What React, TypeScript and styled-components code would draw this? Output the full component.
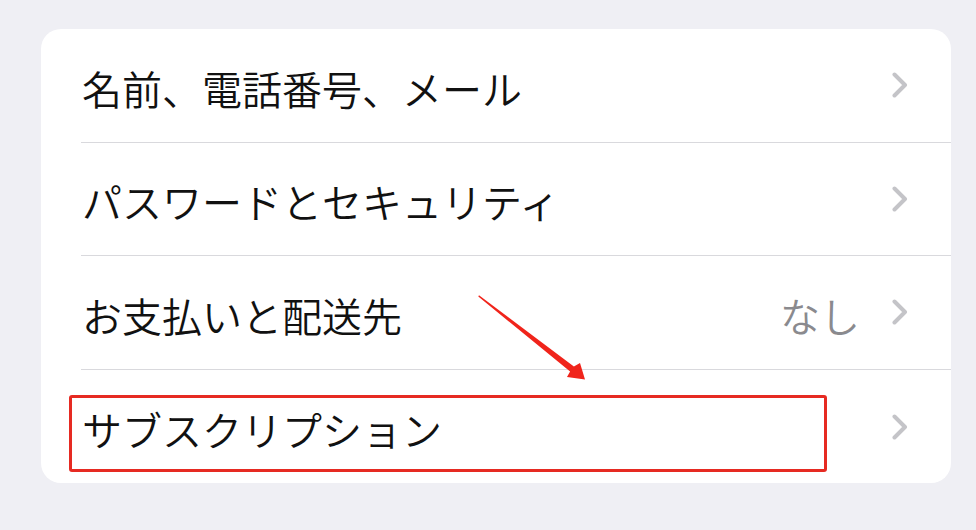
import React from "react";
import styled, { createGlobalStyle } from "styled-components";

const Global = createGlobalStyle`
  html, body { margin: 0; padding: 0; background: #efeff4; }
  body { font-family: "Noto Sans CJK JP", "Noto Sans", sans-serif; }
`;

const Page = styled.div`
  width: 976px;
  height: 530px;
  box-sizing: border-box;
  padding: 29px 25px 0 41px;
  background: #efeff4;
`;

const Card = styled.div`
  position: relative;
  background: #ffffff;
  border-radius: 20px;
`;

const Row = styled.div`
  position: relative;
  height: 113.6px;
  padding-left: 40px;
  box-sizing: border-box;
`;

const RowInner = styled.div<{ $last?: boolean }>`
  height: 100%;
  box-sizing: border-box;
  display: flex;
  align-items: center;
  padding-right: 43px;
  border-bottom: ${(p) => (p.$last ? "none" : "1px solid #d9d9dd")};
`;

const Label = styled.span`
  flex: 1;
  font-size: 40px;
  font-weight: 350;
  color: #111;
  padding-left: 1px;
  padding-top: 5px;
  line-height: 1;
`;

const Detail = styled.span`
  font-size: 40px;
  font-weight: 350;
  color: #8a8a8e;
  line-height: 1;
  padding-top: 5px;
  margin-right: 32px;
`;

const Chevron = styled.svg`
  width: 16px;
  height: 26px;
  flex: none;
`;

const Highlight = styled.div`
  position: absolute;
  left: 28px;
  top: 25px;
  width: 758px;
  height: 77px;
  box-sizing: border-box;
  border: 3px solid #e62a22;
  border-radius: 3px;
  pointer-events: none;
`;

const ArrowLayer = styled.svg`
  position: absolute;
  left: 0;
  top: 0;
  width: 910px;
  height: 454px;
  pointer-events: none;
  overflow: visible;
`;

const ChevronIcon = () => (
  <Chevron viewBox="0 0 16 26">
    <path
      d="M2.5 2.5 L13 13 L2.5 23.5"
      fill="none"
      stroke="#c4c4c8"
      strokeWidth="4"
      strokeLinecap="round"
      strokeLinejoin="round"
    />
  </Chevron>
);

const rows = [
  { label: "名前、電話番号、メール" },
  { label: "パスワードとセキュリティ" },
  { label: "お支払いと配送先", detail: "なし" },
  { label: "サブスクリプション", highlight: true },
];

export default function App() {
  const ox = 41;
  const oy = 29;
  const pts = [
    [479, 295.3],
    [573.9, 366.6],
    [580, 363],
    [585, 379.5],
    [567, 377],
    [570.1, 371.4],
    [478.3, 296.6],
  ]
    .map(([x, y]) => `${x - ox},${y - oy}`)
    .join(" ");

  return (
    <>
      <Global />
      <Page>
        <Card>
          {rows.map((r, i) => (
            <Row key={i}>
              <RowInner $last={i === rows.length - 1}>
                <Label>{r.label}</Label>
                {r.detail && <Detail>{r.detail}</Detail>}
                <ChevronIcon />
              </RowInner>
              {r.highlight && <Highlight />}
            </Row>
          ))}
          <ArrowLayer viewBox="0 0 910 454">
            <polygon points={pts} fill="#f0241b" />
          </ArrowLayer>
        </Card>
      </Page>
    </>
  );
}
